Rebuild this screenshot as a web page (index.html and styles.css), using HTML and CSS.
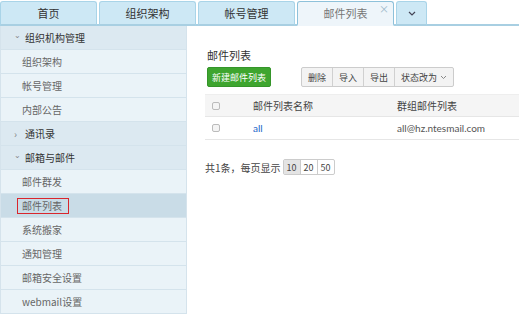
FILE: index.html
```html
<!DOCTYPE html>
<html>
<head>
<meta charset="utf-8">
<link rel="stylesheet" href="styles.css">
</head>
<body>
<div class="tabs">
  <div class="tab">首页</div>
  <div class="tab">组织架构</div>
  <div class="tab">帐号管理</div>
  <div class="tab active">邮件列表<span class="close">×</span></div>
  <div class="tab more"><svg width="8" height="5" viewBox="0 0 8 5"><path d="M1 1l3 3 3-3" fill="none" stroke="#445" stroke-width="1.2"/></svg></div>
</div>
<div class="layout">
  <aside class="side">
    <div class="row head"><span class="chev">⌄</span>组织机构管理</div>
    <div class="row item">组织架构</div>
    <div class="row item">帐号管理</div>
    <div class="row item">内部公告</div>
    <div class="row head"><span class="chev right">›</span>通讯录</div>
    <div class="row head"><span class="chev">⌄</span>邮箱与邮件</div>
    <div class="row item">邮件群发</div>
    <div class="row item sel"><span class="mark">邮件列表</span></div>
    <div class="row item">系统搬家</div>
    <div class="row item">通知管理</div>
    <div class="row item">邮箱安全设置</div>
    <div class="row item">webmail设置</div>
  </aside>
  <main class="main">
    <h1 class="title">邮件列表</h1>
    <div class="toolbar">
      <button class="btn-green">新建邮件列表</button>
      <div class="group">
        <span class="gbtn">删除</span><span class="gbtn">导入</span><span class="gbtn">导出</span><span class="gbtn">状态改为 <svg width="7" height="5" viewBox="0 0 7 5"><path d="M1 1l2.5 2.5L6 1" fill="none" stroke="#888" stroke-width="1"/></svg></span>
      </div>
    </div>
    <div class="table">
      <div class="tr th">
        <span class="cb"></span><span class="c1">邮件列表名称</span><span class="c2">群组邮件列表</span>
      </div>
      <div class="tr">
        <span class="cb"></span><span class="c1 link">all</span><span class="c2">all@hz.ntesmail.com</span>
      </div>
    </div>
    <div class="pager">共1条，每页显示 <span class="pg"><span class="p on">10</span><span class="p">20</span><span class="p">50</span></span></div>
  </main>
</div>
</body>
</html>
```
FILE: styles.css
```css
* { box-sizing: border-box; }
html, body { margin: 0; padding: 0; }
body {
  width: 519px; height: 315px; overflow: hidden;
  font-family: "Noto Sans CJK SC", "Noto Sans", sans-serif;
  background: #fff; color: #333;
}
.tabs {
  display: flex; gap: 2px; height: 26px; align-items: flex-end;
  border-bottom: 2px solid #a8cfe2;
}
.tab {
  position: relative;
  width: 97px; height: 25px; margin-bottom: -2px;
  background: #cde8f5; border: 1px solid #a9d4e8; border-bottom: 2px solid #a8cfe2;
  border-radius: 3px 3px 0 0;
  font-size: 11px; color: #333;
  display: flex; align-items: center; justify-content: center;
}
.tab.active { background: #eef5fa; color: #777; border-color: #8ec1da; border-bottom-color: #eef5fa; }
.tab.more { width: 31px; }
.close { position: absolute; right: 4px; top: -1px; font-size: 10px; color: #9bb7c8; }
.layout { display: flex; }
.side {
  width: 187px; flex: none;
  background: #eaf3f8; border-left: 1px solid #d5e3ec; border-right: 1px solid #d5e3ec;
}
.row {
  height: 24px; display: flex; align-items: center;
  border-bottom: 1px solid #d4e3ec; font-size: 10px; color: #666;
}
.row.head { background: #dce9f1; color: #333; padding-left: 13px; }
.row.item { padding-left: 21px; }
.row.sel { background: #c9dce7; }
.chev { font-size: 8px; color: #888; width: 11px; display: inline-block; line-height: 1; margin-top: -5px; }
.chev.right { font-size: 10px; margin-top: 0; }
.mark { border: 1.5px solid #d9262d; padding: 0 6px 1px 4px; margin-left: -5px; line-height: 13px; }
.main { flex: 1; padding: 0 0 0 18px; }
.title { font-size: 11px; font-weight: normal; color: #333; margin: 21px 0 0 2px; line-height: 16px; }
.toolbar { display: flex; align-items: center; margin-top: 4px; gap: 30px; padding-left: 2px; }
.btn-green {
  background: #3ea52f; color: #fff; border: 1px solid #35952a; border-radius: 2px;
  font-family: inherit; font-size: 9px; height: 20px; width: 64px; padding: 0;
}
.group { display: flex; border: 1px solid #ccc; border-radius: 2px; background: #f3f3f3; height: 20px; }
.gbtn { font-size: 9px; color: #444; padding: 0 6px; display: flex; align-items: center; gap: 3px; border-left: 1px solid #d0d0d0; height: 100%; }
.gbtn:first-child { border-left: none; }
.table { margin-top: 7px; }
.tr { display: flex; align-items: center; height: 23px; border-bottom: 1px solid #e6e6e6; font-size: 10px; color: #555; font-family: "Lato", "Noto Sans CJK SC", sans-serif; }
.tr.th { background: #f5f5f5; color: #444; border-top: 1px solid #eee; }
.cb { width: 8px; height: 8px; border: 1px solid #bbb; border-radius: 2px; background: #f4f4f4; margin-left: 7px; }
.c1 { margin-left: 33px; width: 144px; }
.tr .link { color: #1d66c9; }
.pager { font-size: 10px; color: #444; margin-top: 19px; display: flex; align-items: center; gap: 2px; }
.pg { display: flex; border: 1px solid #ccc; border-radius: 2px; height: 16px; }
.p { padding: 0 3px; border-left: 1px solid #ccc; display: flex; align-items: center; font-size: 9px; }
.p:first-child { border-left: none; }
.p.on { background: #e4e4e4; }
```
